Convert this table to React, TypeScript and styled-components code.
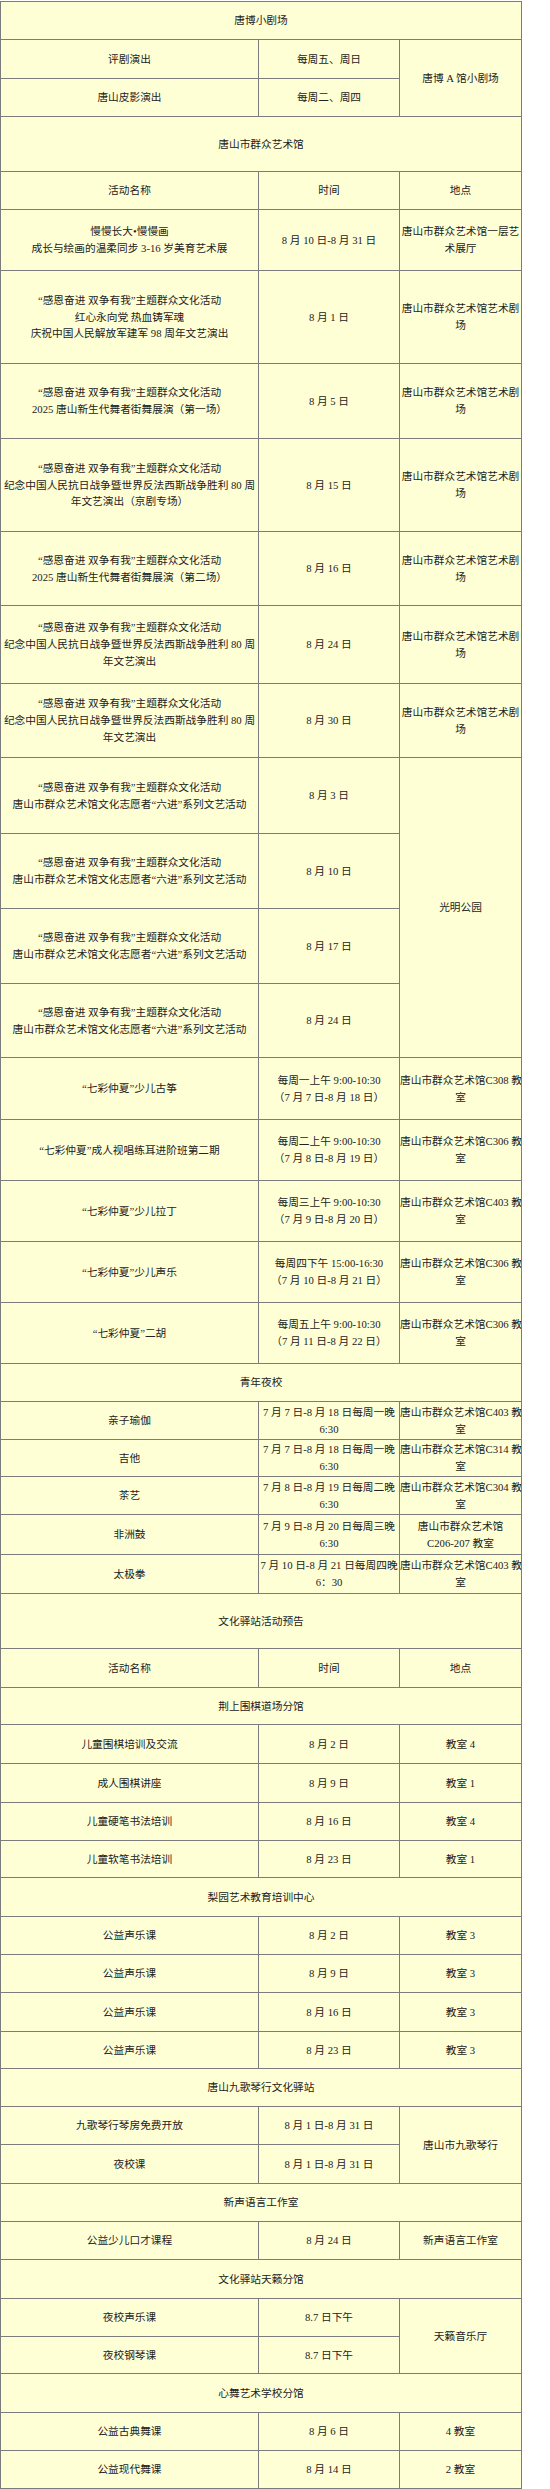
import React from "react";
import styled, { createGlobalStyle } from "styled-components";

type Title = { kind: "title"; h: number; text: string };
type Item = {
  kind: "item";
  h: number;
  name: string[];
  time: string[];
  place?: string[];
  span?: number;
};
type Row = Title | Item;

const t = (text: string, h: number): Title => ({ kind: "title", h, text });
const i = (h: number, name: string[], time: string[], place?: string[], span?: number): Item => ({
  kind: "item",
  h,
  name,
  time,
  place,
  span,
});

const THEME = "“感恩奋进 双争有我”主题群众文化活动";
const KANGZHAN = "纪念中国人民抗日战争暨世界反法西斯战争胜利 80 周";
const JUCHANG = ["唐山市群众艺术馆艺术剧", "场"];
const LIUJIN = "唐山市群众艺术馆文化志愿者“六进”系列文艺活动";
const room = (r: string) => ["唐山市群众艺术馆" + r + " 教", "室"];

const rows: Row[] = [
  t("唐博小剧场", 38),
  i(39, ["评剧演出"], ["每周五、周日"], ["唐博 A 馆小剧场"], 2),
  i(38, ["唐山皮影演出"], ["每周二、周四"]),
  t("唐山市群众艺术馆", 55),
  i(38, ["活动名称"], ["时间"], ["地点"]),
  i(61, ["慢慢长大•慢慢画", "成长与绘画的温柔同步 3-16 岁美育艺术展"], ["8 月 10 日-8 月 31 日"], ["唐山市群众艺术馆一层艺", "术展厅"]),
  i(93, [THEME, "红心永向党 热血铸军魂", "庆祝中国人民解放军建军 98 周年文艺演出"], ["8 月 1 日"], JUCHANG),
  i(75, [THEME, "2025 唐山新生代舞者街舞展演（第一场）"], ["8 月 5 日"], JUCHANG),
  i(93, [THEME, KANGZHAN, "年文艺演出（京剧专场）"], ["8 月 15 日"], JUCHANG),
  i(74, [THEME, "2025 唐山新生代舞者街舞展演（第二场）"], ["8 月 16 日"], JUCHANG),
  i(78, [THEME, KANGZHAN, "年文艺演出"], ["8 月 24 日"], JUCHANG),
  i(74, [THEME, KANGZHAN, "年文艺演出"], ["8 月 30 日"], JUCHANG),
  i(76, [THEME, LIUJIN], ["8 月 3 日"], ["光明公园"], 4),
  i(75, [THEME, LIUJIN], ["8 月 10 日"]),
  i(75, [THEME, LIUJIN], ["8 月 17 日"]),
  i(74, [THEME, LIUJIN], ["8 月 24 日"]),
  i(62, ["“七彩仲夏”少儿古筝"], ["每周一上午 9:00-10:30", "（7 月 7 日-8 月 18 日）"], room("C308")),
  i(61, ["“七彩仲夏”成人视唱练耳进阶班第二期"], ["每周二上午 9:00-10:30", "（7 月 8 日-8 月 19 日）"], room("C306")),
  i(61, ["“七彩仲夏”少儿拉丁"], ["每周三上午 9:00-10:30", "（7 月 9 日-8 月 20 日）"], room("C403")),
  i(61, ["“七彩仲夏”少儿声乐"], ["每周四下午 15:00-16:30", "（7 月 10 日-8 月 21 日）"], room("C306")),
  i(61, ["“七彩仲夏”二胡"], ["每周五上午 9:00-10:30", "（7 月 11 日-8 月 22 日）"], room("C306")),
  t("青年夜校", 38),
  i(38, ["亲子瑜伽"], ["7 月 7 日-8 月 18 日每周一晚", "6:30"], room("C403")),
  i(37, ["吉他"], ["7 月 7 日-8 月 18 日每周一晚", "6:30"], room("C314")),
  i(38, ["茶艺"], ["7 月 8 日-8 月 19 日每周二晚", "6:30"], room("C304")),
  i(40, ["非洲鼓"], ["7 月 9 日-8 月 20 日每周三晚", "6:30"], ["唐山市群众艺术馆", "C206-207 教室"]),
  i(39, ["太极拳"], ["7 月 10 日-8 月 21 日每周四晚", "6：30"], room("C403")),
  t("文化驿站活动预告", 55),
  i(39, ["活动名称"], ["时间"], ["地点"]),
  t("荆上围棋道场分馆", 37),
  i(39, ["儿童围棋培训及交流"], ["8 月 2 日"], ["教室 4"]),
  i(39, ["成人围棋讲座"], ["8 月 9 日"], ["教室 1"]),
  i(38, ["儿童硬笔书法培训"], ["8 月 16 日"], ["教室 4"]),
  i(37, ["儿童软笔书法培训"], ["8 月 23 日"], ["教室 1"]),
  t("梨园艺术教育培训中心", 39),
  i(38, ["公益声乐课"], ["8 月 2 日"], ["教室 3"]),
  i(38, ["公益声乐课"], ["8 月 9 日"], ["教室 3"]),
  i(39, ["公益声乐课"], ["8 月 16 日"], ["教室 3"]),
  i(37, ["公益声乐课"], ["8 月 23 日"], ["教室 3"]),
  t("唐山九歌琴行文化驿站", 38),
  i(38, ["九歌琴行琴房免费开放"], ["8 月 1 日-8 月 31 日"], ["唐山市九歌琴行"], 2),
  i(39, ["夜校课"], ["8 月 1 日-8 月 31 日"]),
  t("新声语言工作室", 38),
  i(38, ["公益少儿口才课程"], ["8 月 24 日"], ["新声语言工作室"]),
  t("文化驿站天籁分馆", 39),
  i(38, ["夜校声乐课"], ["8.7 日下午"], ["天籁音乐厅"], 2),
  i(37, ["夜校钢琴课"], ["8.7 日下午"]),
  t("心舞艺术学校分馆", 39),
  i(38, ["公益古典舞课"], ["8 月 6 日"], ["4 教室"]),
  i(38, ["公益现代舞课"], ["8 月 14 日"], ["2 教室"]),
];

const GlobalStyle = createGlobalStyle`
  html, body {
    margin: 0;
    padding: 0;
    background: #ffffff;
  }
`;

const Page = styled.div`
  width: 550px;
  height: 2489px;
  padding-top: 1px;
  box-sizing: border-box;
  font-family: "Liberation Serif", "Noto Sans CJK SC", serif;
  font-size: 10.7px;
  color: #222222;
`;

const Schedule = styled.table`
  width: 522px;
  table-layout: fixed;
  border-collapse: collapse;
  background: #ffffd6;
  border: 1px solid #7c7c7c;
`;

const Row = styled.tr<{ $h: number }>`
  height: ${(p) => p.$h}px;
`;

const Cell = styled.td`
  padding: 0;
  border: 1px solid #7c7c7c;
  text-align: center;
  vertical-align: middle;
  line-height: 16.7px;
  white-space: nowrap;
  overflow: hidden;
`;

const Line = styled.span`
  display: block;
`;

const Lines = ({ items }: { items: string[] }) => (
  <>
    {items.map((s, n) => (
      <Line key={n}>{s}</Line>
    ))}
  </>
);

export default function App() {
  return (
    <>
      <GlobalStyle />
      <Page>
        <Schedule>
          <colgroup>
            <col style={{ width: 258 }} />
            <col style={{ width: 141 }} />
            <col style={{ width: 122 }} />
          </colgroup>
          <tbody>
            {rows.map((r, n) =>
              r.kind === "title" ? (
                <Row key={n} $h={r.h}>
                  <Cell colSpan={3}>{r.text}</Cell>
                </Row>
              ) : (
                <Row key={n} $h={r.h}>
                  <Cell>
                    <Lines items={r.name} />
                  </Cell>
                  <Cell>
                    <Lines items={r.time} />
                  </Cell>
                  {r.place && (
                    <Cell rowSpan={r.span ?? 1}>
                      <Lines items={r.place} />
                    </Cell>
                  )}
                </Row>
              )
            )}
          </tbody>
        </Schedule>
      </Page>
    </>
  );
}
